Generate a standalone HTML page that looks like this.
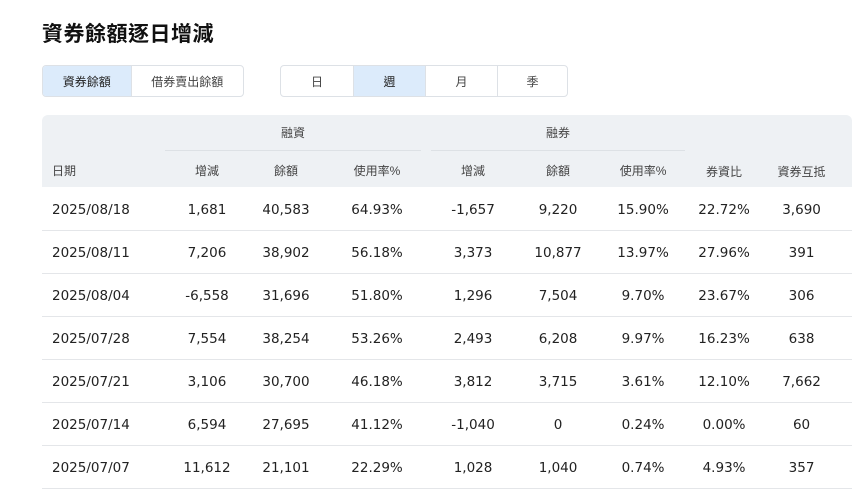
<!DOCTYPE html>
<html><head><meta charset="utf-8"><style>
*{margin:0;padding:0;box-sizing:border-box}
body{width:864px;height:491px;background:#fff;font-family:"DejaVu Sans","Liberation Sans","Noto Sans CJK TC",sans-serif;color:#222;overflow:hidden;position:relative}
h1{position:absolute;left:42px;top:18px;font-size:21px;font-weight:bold;font-family:"Liberation Sans","Noto Sans CJK TC",sans-serif;color:#111;letter-spacing:0.5px}
.seg{position:absolute;top:65px;height:32px;display:flex;border:1px solid #dde1e6;border-radius:4px;overflow:hidden;font-family:"Liberation Sans","Noto Sans CJK TC",sans-serif;font-size:12px;color:#444}
.seg div{display:flex;align-items:center;justify-content:center;border-left:1px solid #dde1e6}
.seg div:first-child{border-left:none}
.seg .on{background:#dcebfb;color:#222}
table{position:absolute;left:42px;top:115px;width:810px;border-collapse:collapse;table-layout:fixed}
thead th{background:#eef1f4;font-weight:normal;font-size:12px;color:#444;font-family:"Liberation Sans","Noto Sans CJK TC",sans-serif}
.r1 th{height:36px;padding-top:2px}
.r2 th{height:36px;padding-top:2px}
td{height:43px;padding-top:3px;text-align:center;font-size:13.5px;border-bottom:1px solid #e4e6e9;color:#222}
td:first-child{text-align:left;padding-left:10px}
.l{text-align:left;padding-left:10px}
</style></head><body>
<h1>資券餘額逐日增減</h1>
<div class="seg" style="left:42px;width:202px"><div class="on" style="width:88px">資券餘額</div><div style="width:113px">借券賣出餘額</div></div>
<div class="seg" style="left:280px;width:288px"><div style="width:72px">日</div><div class="on" style="width:72px">週</div><div style="width:72px">月</div><div style="width:70px">季</div></div>
<table>
<colgroup><col style="width:123px"><col style="width:84px"><col style="width:74px"><col style="width:108px"><col style="width:84px"><col style="width:86px"><col style="width:84px"><col style="width:78px"><col style="width:89px"></colgroup>
<thead>
<tr class="r1"><th style="border-top-left-radius:6px"></th><th colspan="3" style="padding:0"><div style="height:36px;display:flex;align-items:center;justify-content:center;border-bottom:1px solid #dde1e5;margin-right:10px">融資</div></th><th colspan="3" style="padding:0"><div style="height:36px;display:flex;align-items:center;justify-content:center;border-bottom:1px solid #dde1e5">融券</div></th><th></th><th style="border-top-right-radius:6px"></th></tr>
<tr class="r2"><th class="l">日期</th><th>增減</th><th>餘額</th><th>使用率%</th><th>增減</th><th>餘額</th><th>使用率%</th><th style="padding-top:4px">券資比</th><th style="padding-top:4px;padding-right:12px">資券互抵</th></tr>
</thead>
<tbody>
<tr><td>2025/08/18</td><td>1,681</td><td>40,583</td><td>64.93%</td><td>-1,657</td><td>9,220</td><td>15.90%</td><td>22.72%</td><td style="padding-right:12px">3,690</td></tr>
<tr><td>2025/08/11</td><td>7,206</td><td>38,902</td><td>56.18%</td><td>3,373</td><td>10,877</td><td>13.97%</td><td>27.96%</td><td style="padding-right:12px">391</td></tr>
<tr><td>2025/08/04</td><td>-6,558</td><td>31,696</td><td>51.80%</td><td>1,296</td><td>7,504</td><td>9.70%</td><td>23.67%</td><td style="padding-right:12px">306</td></tr>
<tr><td>2025/07/28</td><td>7,554</td><td>38,254</td><td>53.26%</td><td>2,493</td><td>6,208</td><td>9.97%</td><td>16.23%</td><td style="padding-right:12px">638</td></tr>
<tr><td>2025/07/21</td><td>3,106</td><td>30,700</td><td>46.18%</td><td>3,812</td><td>3,715</td><td>3.61%</td><td>12.10%</td><td style="padding-right:12px">7,662</td></tr>
<tr><td>2025/07/14</td><td>6,594</td><td>27,695</td><td>41.12%</td><td>-1,040</td><td>0</td><td>0.24%</td><td>0.00%</td><td style="padding-right:12px">60</td></tr>
<tr><td>2025/07/07</td><td>11,612</td><td>21,101</td><td>22.29%</td><td>1,028</td><td>1,040</td><td>0.74%</td><td>4.93%</td><td style="padding-right:12px">357</td></tr>
</tbody></table>
</body></html>
